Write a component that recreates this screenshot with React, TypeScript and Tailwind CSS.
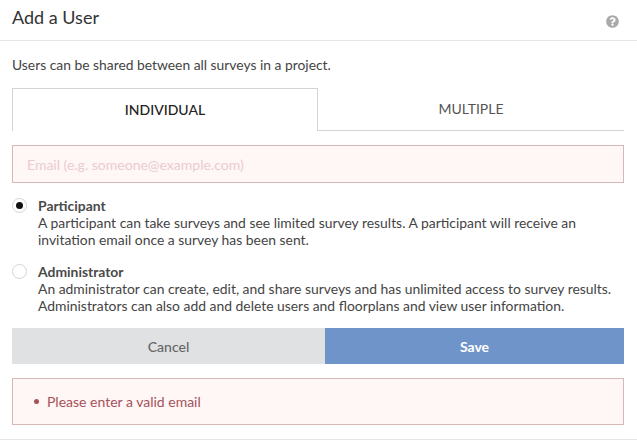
import { FaQuestionCircle } from "react-icons/fa";

const font = { fontFamily: "Lato, sans-serif" };

function RadioRow({ label, checked, lines }: { label: string; checked: boolean; lines: string[] }) {
  return (
    <div className="flex items-start">
      <div className="w-[26px] shrink-0 pt-[1px]">
        <div className="w-[15px] h-[15px] rounded-full border border-[#d4d4d5] flex items-center justify-center">
          {checked && <div className="w-[7px] h-[7px] rounded-full bg-[#111111]" />}
        </div>
      </div>
      <div className="text-[13.9px] leading-[17px] text-[#444444]">
        <div className="font-bold text-[#4a4a4a]">{label}</div>
        {lines.map((l, i) => (
          <div key={i} className="whitespace-nowrap">{l}</div>
        ))}
      </div>
    </div>
  );
}

export default function App() {
  return (
    <div className="w-[637px] h-[440px] bg-white overflow-hidden flex flex-col" style={font}>
      <header className="h-[41px] shrink-0 border-b border-[#e5e5e5] flex items-center justify-between pl-3 pr-[18px] pb-[5px]">
        <h1 className="text-[18px] leading-[22px] text-[#333333] mb-[1px]">Add a User</h1>
        <FaQuestionCircle size={13} className="text-[#a9a9a9] mt-[8px]" />
      </header>

      <div className="flex-1 flex flex-col pl-3 pr-[13px]">
        <p className="text-[13.85px] leading-[17px] text-[#444444] mt-[15px]">Users can be shared between all surveys in a project.</p>

        <div className="flex mt-[15px] h-[43px]">
          <div className="w-[306px] border border-b-0 border-[#d4d4d5] flex items-center justify-center text-[14px] font-medium text-[#222222] pb-[2px]">
            INDIVIDUAL
          </div>
          <div className="flex-1 border-b border-[#d4d4d5] flex items-center justify-center text-[14px] text-[#555555] pb-[2px]">
            MULTIPLE
          </div>
        </div>

        <div className="mt-[14px] h-[38px] border border-[#d5b8b8] bg-[#fff6f6] flex items-center pl-[14px] text-[14px] text-[#e9cdd0]">
          Email (e.g. someone@example.com)
        </div>

        <div className="mt-[14px]">
          <RadioRow
            label="Participant"
            checked
            lines={[
              "A participant can take surveys and see limited survey results. A participant will receive an",
              "invitation email once a survey has been sent.",
            ]}
          />
        </div>
        <div className="mt-[15px]">
          <RadioRow
            label="Administrator"
            checked={false}
            lines={[
              "An administrator can create, edit, and share surveys and has unlimited access to survey results.",
              "Administrators can also add and delete users and floorplans and view user information.",
            ]}
          />
        </div>

        <div className="flex mt-[14px] h-[36px] text-[14px] font-medium">
          <div className="w-[313px] bg-[#e0e1e2] text-[#666666] flex items-center justify-center">Cancel</div>
          <div className="flex-1 bg-[#6f94c9] text-white font-bold flex items-center justify-center">Save</div>
        </div>

        <div className="mt-[14px] h-[47px] border border-[#d5b8b8] bg-[#fff6f6] flex items-center pl-[21px] text-[14px] text-[#a5525a]">
          <span className="w-[5px] h-[5px] rounded-full bg-[#a5525a] mr-[8px]" />
          Please enter a valid email
        </div>
      </div>

      <div className="h-px bg-[#e5e5e5]" />
    </div>
  );
}
